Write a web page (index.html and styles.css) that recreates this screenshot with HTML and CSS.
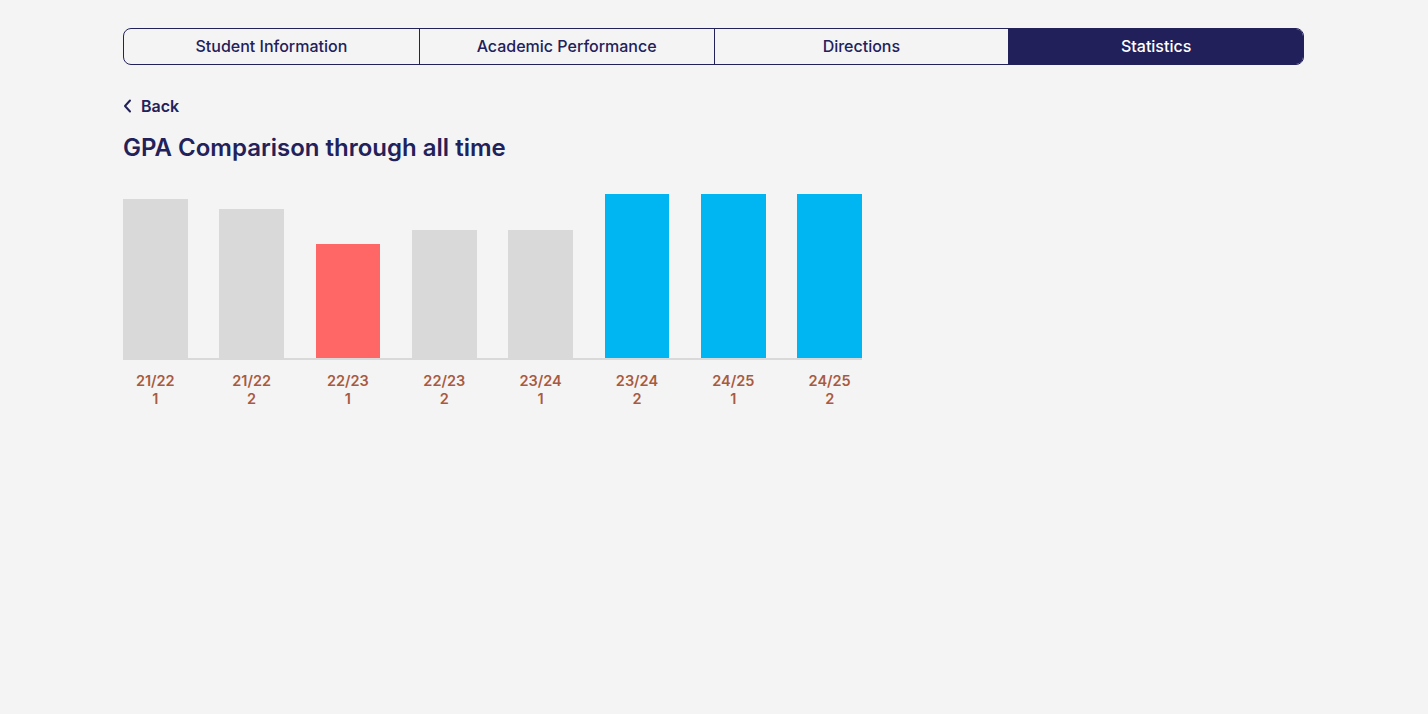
FILE: index.html
```html
<!DOCTYPE html>
<html lang="en">
<head>
<meta charset="utf-8">
<title>Statistics</title>
<link rel="stylesheet" href="styles.css">
</head>
<body>
<div class="page">
  <nav class="tabs">
    <div class="tab">Student Information</div>
    <div class="tab">Academic Performance</div>
    <div class="tab">Directions</div>
    <div class="tab active">Statistics</div>
  </nav>
  <a class="back" href="#">
    <svg width="9" height="14" viewBox="0 0 9 14" aria-hidden="true"><path d="M7 1.5 L2 7 L7 12.5" fill="none" stroke="#22215a" stroke-width="2" stroke-linecap="round" stroke-linejoin="round"/></svg>
    <span>Back</span>
  </a>
  <h1 class="title">GPA Comparison through all time</h1>
  <div class="chart">
    <div class="bars">
      <div class="bar gray" style="height:159px"></div>
      <div class="bar gray" style="height:149px"></div>
      <div class="bar red" style="height:114px"></div>
      <div class="bar gray" style="height:128px"></div>
      <div class="bar gray" style="height:128px"></div>
      <div class="bar blue" style="height:164px"></div>
      <div class="bar blue" style="height:164px"></div>
      <div class="bar blue" style="height:164px"></div>
    </div>
    <div class="labels">
      <div class="label">21/22<br>1</div>
      <div class="label">21/22<br>2</div>
      <div class="label">22/23<br>1</div>
      <div class="label">22/23<br>2</div>
      <div class="label">23/24<br>1</div>
      <div class="label">23/24<br>2</div>
      <div class="label">24/25<br>1</div>
      <div class="label">24/25<br>2</div>
    </div>
  </div>
</div>
</body>
</html>
```
FILE: styles.css
```css
* { box-sizing: border-box; }
html, body {
  margin: 0;
  padding: 0;
  background: #f4f4f4;
  font-family: Inter, "Noto Sans", sans-serif;
  color: #22215a;
}
.page {
  width: 1181px;
  margin: 0 0 0 123px;
  padding-top: 28px;
}
.tabs {
  display: grid;
  grid-template-columns: repeat(4, 1fr);
  height: 37px;
  border: 1px solid #22215a;
  border-radius: 8px;
  overflow: hidden;
}
.tab {
  display: flex;
  align-items: center;
  justify-content: center;
  padding-bottom: 1px;
  font-size: 16px;
  font-weight: 500;
  color: #22215a;
  border-left: 1px solid #22215a;
}
.tab:first-child { border-left: none; }
.tab.active {
  background: #22205a;
  color: #ffffff;
}
.back {
  display: inline-flex;
  align-items: center;
  gap: 9px;
  margin-top: 31px;
  height: 20px;
  font-size: 16px;
  font-weight: 600;
  color: #22215a;
  text-decoration: none;
}
.title {
  margin: 16px 0 0;
  font-size: 24px;
  line-height: 30px;
  font-weight: 600;
  color: #22215a;
}
.chart {
  width: 739px;
  margin-top: 31px;
}
.bars {
  display: flex;
  justify-content: space-between;
  align-items: flex-end;
  height: 166px;
  border-bottom: 2px solid #d9d9d9;
}
.bar { width: 64.5px; }
.bar.gray { background: #d9d9d9; }
.bar.red { background: #ff6666; }
.bar.blue { background: #00b6f2; }
.labels {
  display: flex;
  justify-content: space-between;
  margin-top: 12px;
}
.label {
  width: 64.5px;
  text-align: center;
  font-size: 14.5px;
  line-height: 17.5px;
  font-weight: 600;
  color: #a85a40;
}
```
